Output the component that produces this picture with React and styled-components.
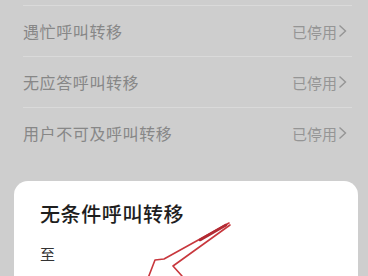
import React from 'react';
import styled, {createGlobalStyle} from 'styled-components';

const GlobalStyle = createGlobalStyle`
  html, body {
    margin: 0;
    padding: 0;
    background: #cecece;
    overflow: hidden;
  }
  body {
    font-family: "Noto Sans CJK SC", "Noto Sans", sans-serif;
  }
`;

const Screen = styled.div`
  position: relative;
  width: 368px;
  height: 276px;
  overflow: hidden;
  background: #cecece;
`;

const List = styled.div`
  padding: 5px 16px 0 23px;
`;

const Row = styled.div`
  height: 50px;
  border-top: 1px solid #dadada;
  display: flex;
  align-items: center;
  justify-content: space-between;
`;

const Label = styled.span`
  font-size: 16px;
  color: #878787;
  letter-spacing: 0.6px;
`;

const Status = styled.span`
  display: flex;
  align-items: center;
  gap: 1px;
  margin-right: 5px;
  font-size: 15px;
  color: #959595;
`;

const Sheet = styled.div`
  margin: 23px 10px 0 14px;
  background: #fff;
  border-radius: 14px;
  padding: 20px 26px 0;
  height: 120px;
`;

const Title = styled.div`
  font-size: 20px;
  line-height: 26px;
  font-weight: 500;
  color: #1e1e1e;
  letter-spacing: 0.6px;
`;

const Caption = styled.div`
  margin-top: 17px;
  font-size: 15px;
  line-height: 20px;
  color: #333;
`;

const Arrow = styled.svg`
  position: absolute;
  left: 0;
  top: 0;
  pointer-events: none;
`;

const Chevron = () => (
    <svg width="9" height="14" viewBox="0 0 9 14">
        <path d="M1.5 1.5 L7.5 7 L1.5 12.5" fill="none" stroke="#959595" strokeWidth="1.4"/>
    </svg>
);

const rows = ['遇忙呼叫转移', '无应答呼叫转移', '用户不可及呼叫转移'];

const App = () => (
    <Screen>
        <GlobalStyle/>
        <List>
            {rows.map(name => (
                <Row key={name}>
                    <Label>{name}</Label>
                    <Status>已停用<Chevron/></Status>
                </Row>
            ))}
        </List>
        <Sheet>
            <Title>无条件呼叫转移</Title>
            <Caption>至</Caption>
        </Sheet>
        <Arrow width="368" height="276" viewBox="0 0 368 276">
            <g fill="none" stroke="#c8373d" strokeWidth="1.6" strokeLinejoin="round" strokeLinecap="round">
                <path d="M229 223 L164 259 L155 260 L145 286"/>
                <path d="M230 225 L173 266 L182 276"/>
                <path d="M226 225 L200 240" strokeWidth="2.6" stroke="#b22a33"/>
            </g>
        </Arrow>
    </Screen>
);

export default App;
